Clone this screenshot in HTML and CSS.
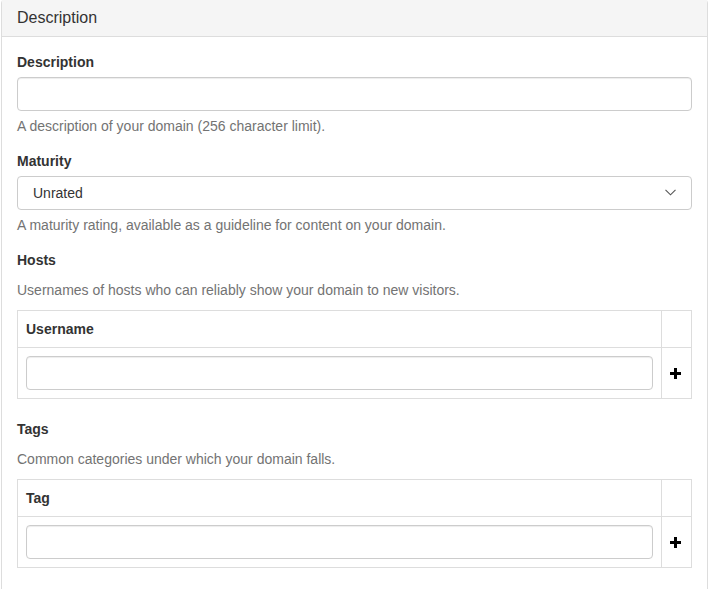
FILE: index.html
```html
<!DOCTYPE html>
<html lang="en">
<head>
<meta charset="utf-8">
<title>Description</title>
<link rel="stylesheet" href="styles.css">
</head>
<body>
<div class="panel">
  <div class="panel-heading">Description</div>
  <div class="panel-body">
    <div class="form-group">
      <label class="control-label">Description</label>
      <input class="form-control" type="text">
      <p class="help-block">A description of your domain (256 character limit).</p>
    </div>
    <div class="form-group">
      <label class="control-label">Maturity</label>
      <div class="select-wrap">
        <div class="form-control select">Unrated</div>
        <svg class="chevron" width="11" height="7" viewBox="0 0 11 7"><path d="M0.5 0.8 L5.5 5.8 L10.5 0.8" fill="none" stroke="#555" stroke-width="1.1"/></svg>
      </div>
      <p class="help-block">A maturity rating, available as a guideline for content on your domain.</p>
    </div>
    <div class="form-group">
      <label class="control-label">Hosts</label>
      <p class="help-block">Usernames of hosts who can reliably show your domain to new visitors.</p>
      <table class="table">
        <thead><tr><th>Username</th><th class="act"></th></tr></thead>
        <tbody><tr>
          <td><input class="form-control" type="text"></td>
          <td class="act"><svg class="plus" width="13" height="12" viewBox="0 0 13 12"><rect x="4" y="1" width="3" height="11" fill="#000"/><rect x="0" y="5" width="11" height="3" fill="#000"/></svg></td>
        </tr></tbody>
      </table>
    </div>
    <div class="form-group">
      <label class="control-label">Tags</label>
      <p class="help-block">Common categories under which your domain falls.</p>
      <table class="table">
        <thead><tr><th>Tag</th><th class="act"></th></tr></thead>
        <tbody><tr>
          <td><input class="form-control" type="text"></td>
          <td class="act"><svg class="plus" width="13" height="12" viewBox="0 0 13 12"><rect x="4" y="1" width="3" height="11" fill="#000"/><rect x="0" y="5" width="11" height="3" fill="#000"/></svg></td>
        </tr></tbody>
      </table>
    </div>
  </div>
</div>
</body>
</html>
```

FILE: styles.css
```css
html, body {
  margin: 0;
  padding: 0;
  overflow: hidden;
  background: #fff;
}
body {
  font-family: "Liberation Sans", Arial, sans-serif;
  font-size: 14px;
  line-height: 20px;
  color: #333;
}
.panel {
  box-sizing: border-box;
  width: 707px;
  margin: -1px 0 0 1px;
  border: 1px solid #ddd;
  border-radius: 4px;
}
.panel-heading {
  background: #f5f5f5;
  border-bottom: 1px solid #ddd;
  padding: 10px 15px;
  font-size: 16px;
  line-height: 16px;
  color: #333;
}
.panel-body {
  padding: 15px;
}
.form-group {
  margin-bottom: 15px;
}
.control-label {
  display: inline-block;
  font-weight: bold;
  margin-bottom: 5px;
}
.form-control {
  display: block;
  box-sizing: border-box;
  width: 100%;
  height: 34px;
  margin: 0;
  padding: 6px 12px;
  font: inherit;
  color: #555;
  background: #fff;
  border: 1px solid #ccc;
  border-radius: 4px;
  box-shadow: inset 0 1px 1px rgba(0,0,0,0.075);
}
.select-wrap {
  position: relative;
}
.select {
  padding-left: 15px;
  color: #333;
  box-shadow: none;
}
.chevron {
  position: absolute;
  right: 16px;
  top: 13px;
}
.help-block {
  margin: 5px 0 10px;
  color: #737373;
}
.table {
  width: 100%;
  border-collapse: collapse;
  margin-bottom: 20px;
  border: 1px solid #ddd;
}
.table th, .table td {
  border: 1px solid #ddd;
  padding: 8px;
  line-height: 20px;
  text-align: left;
  vertical-align: middle;
}
.table th {
  font-weight: bold;
}
.table .act {
  width: 13px;
  text-align: center;
}
.plus {
  display: block;
}
```
